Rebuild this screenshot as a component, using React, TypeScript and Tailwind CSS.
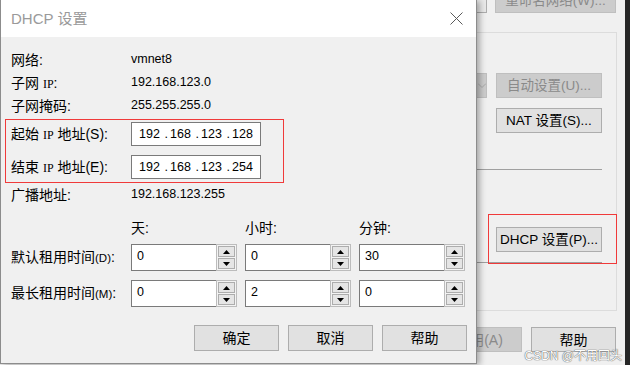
import React from "react";

const Up = () => (
  <svg width="7" height="4" viewBox="0 0 7 4"><polygon points="0,4 3.5,0 7,4" fill="#000" /></svg>
);
const Down = () => (
  <svg width="7" height="4" viewBox="0 0 7 4"><polygon points="0,0 7,0 3.5,4" fill="#000" /></svg>
);

function Spinner({ value }: { value: string }) {
  return (
    <div className="flex w-[106px] h-[27px] shrink-0">
      <div className="flex-1 bg-white border border-r-0 border-[#7a7a7a] flex items-center pl-[5px] pb-[2px] text-[12.5px] leading-none text-[#000]">
        {value}
      </div>
      <div className="w-[21px] h-full border border-[#bcbcbc] bg-[#f3f3f3] p-[1px] flex flex-col gap-[1px]">
        <div className="flex-1 bg-[#e5e5e5] border border-[#adadad] flex items-center justify-center">
          <Up />
        </div>
        <div className="flex-1 bg-[#e5e5e5] border border-[#adadad] flex items-center justify-center">
          <Down />
        </div>
      </div>
    </div>
  );
}

function IpBox({ parts }: { parts: string[] }) {
  return (
    <div className="w-[130px] h-[24px] bg-white border border-[#7a7a7a] flex items-center pl-[7px] text-[12.5px] leading-none">
      {parts.map((p, i) => (
        <React.Fragment key={i}>
          {i > 0 && <span className="w-[10px] flex justify-end pr-[2px]">.</span>}
          <span className="w-[21px]">{p}</span>
        </React.Fragment>
      ))}
    </div>
  );
}

function InfoRow({ label, value }: { label: React.ReactNode; value: string }) {
  return (
    <div className="flex items-center h-[23px] shrink-0">
      <div className="w-[120px] text-[14px] leading-none">{label}</div>
      <div className="text-[12.5px] leading-none">{value}</div>
    </div>
  );
}

const Ip = () => <span className="[font-family:'Liberation_Serif',serif] text-[12px]">IP</span>;

function Btn({ children, disabled }: { children: React.ReactNode; disabled?: boolean }) {
  return (
    <div
      className={
        disabled
          ? "w-[106px] h-[25px] shrink-0 flex items-center justify-center bg-[#cccccc] border border-[#bfbfbf] text-[#8a8a8a] text-[13.5px] leading-none"
          : "w-[106px] h-[25px] shrink-0 flex items-center justify-center bg-[#e1e1e1] border border-[#adadad] text-black text-[13.5px] leading-none"
      }
    >
      {children}
    </div>
  );
}

export default function App() {
  return (
    <div className="relative w-[630px] h-[365px] overflow-hidden bg-[#f0f0f0] text-black [font-family:'Liberation_Sans','Noto_Sans_CJK_SC',sans-serif]">
      {/* background window */}
      <div className="flex h-full">
        <div className="w-[477px] shrink-0" />
        <div className="relative w-[148px] shrink-0 flex flex-col">
          <div className="flex items-end h-[13px] shrink-0">
            <div className="w-[10px] h-[25px] shrink-0 bg-[#e9e9e9] border border-l-0 border-[#adadad]" />
            <div className="ml-[8px] w-[121px] h-[25px] shrink-0 flex items-center justify-center bg-[#cccccc] border border-[#bfbfbf] text-[#8a8a8a] text-[13.5px] leading-none">
              重命名网络(W)...
            </div>
          </div>
          <div className="mt-[19px] w-[140px] h-[279px] shrink-0 border-t border-r border-b border-[#dcdcdc] flex flex-col">
            <div className="mt-[40px] flex items-center h-[25px]">
              <div className="w-[10px] h-[25px] bg-[#cccccc] border-y border-r border-[#bfbfbf] flex items-center justify-start">
                <svg width="8" height="6" viewBox="0 0 8 6" className="ml-[1px]">
                  <path d="M0 0.5L4 4.5L8 0.5" stroke="#a8a8a8" strokeWidth="1" fill="none" />
                </svg>
              </div>
              <div className="ml-[9px]">
                <Btn disabled>自动设置(U)...</Btn>
              </div>
            </div>
            <div className="mt-[10px] ml-[19px]">
              <Btn>NAT 设置(S)...</Btn>
            </div>
            <div className="mt-[36px] w-[125px] h-px bg-[#a0a0a0]" />
            <div className="mt-[57px] ml-[19px]">
              <Btn>DHCP 设置(P)...</Btn>
            </div>
            <div className="mt-[10px] w-[125px] h-px bg-[#a0a0a0]" />
          </div>
          <div className="mt-[16px] flex gap-[9px] shrink-0">
            <div className="ml-[-40px] w-[85px] h-[25px] flex items-center justify-center bg-[#cccccc] border border-[#bfbfbf] text-[#8a8a8a] text-[14px] leading-none">
              应用(A)
            </div>
            <div className="w-[85px] h-[25px] flex items-center justify-center bg-[#e1e1e1] border border-[#adadad] text-[14px] leading-none">
              帮助
            </div>
          </div>
          {/* red annotation */}
          <div className="absolute left-[11px] top-[214px] w-[129px] h-[50px] border border-[#f03a3a]" />
        </div>
        <div className="flex-1 bg-[#262626]" />
      </div>

      {/* dialog */}
      <div className="absolute left-0 top-0 w-[477px] h-[364px] flex flex-col bg-[#f0f0f0] border-l border-r border-b border-[#8c8c8c] shadow-[3px_1px_6px_rgba(0,0,0,0.3)]">
        <div className="h-[37px] shrink-0 bg-white flex items-center justify-between pl-[10px] pr-[13px]">
          <span className="text-[15px] leading-none text-[#9a9a9a]">DHCP 设置</span>
          <svg width="13" height="13" viewBox="0 0 13 13">
            <path d="M0.5 0.5L12.5 12.5M12.5 0.5L0.5 12.5" stroke="#5a5a5a" strokeWidth="1" />
          </svg>
        </div>
        <div className="flex flex-col pl-[10px] pr-[9px] pt-[11px]">
          <InfoRow label="网络:" value="vmnet8" />
          <InfoRow label={<>子网 <Ip />:</>} value="192.168.123.0" />
          <InfoRow label="子网掩码:" value="255.255.255.0" />

          <div className="mt-[2px] ml-[-6px] w-[279px] h-[64px] shrink-0 border border-[#f03a3a] pl-[5px] pt-[2px] flex flex-col">
            <div className="flex items-center h-[24px]">
              <div className="w-[120px] text-[14px] leading-none">起始 <Ip /> 地址(S):</div>
              <IpBox parts={["192", "168", "123", "128"]} />
            </div>
            <div className="mt-[9px] flex items-center h-[24px]">
              <div className="w-[120px] text-[14px] leading-none">结束 <Ip /> 地址(E):</div>
              <IpBox parts={["192", "168", "123", "254"]} />
            </div>
          </div>

          <InfoRow label="广播地址:" value="192.168.123.255" />

          <div className="mt-[11px] h-[22px] flex items-center text-[14px] leading-none">
            <div className="w-[120px]" />
            <div className="w-[114px]">天:</div>
            <div className="w-[114px]">小时:</div>
            <div>分钟:</div>
          </div>

          <div className="mt-[5px] flex items-center gap-[8px]">
            <div className="w-[112px] text-[14px] leading-none">
              默认租用时间<span className="text-[11.5px]">(D)</span>:
            </div>
            <Spinner value="0" />
            <Spinner value="0" />
            <Spinner value="30" />
          </div>
          <div className="mt-[9px] flex items-center gap-[8px]">
            <div className="w-[112px] text-[14px] leading-none">
              最长租用时间<span className="text-[11.5px]">(M)</span>:
            </div>
            <Spinner value="0" />
            <Spinner value="2" />
            <Spinner value="0" />
          </div>

          <div className="mt-[18px] flex justify-end gap-[9px]">
            {["确定", "取消", "帮助"].map((t) => (
              <div
                key={t}
                className="w-[85px] h-[26px] flex items-center justify-center bg-[#e1e1e1] border border-[#adadad] text-[14px] leading-none"
              >
                {t}
              </div>
            ))}
          </div>
        </div>
      </div>

      <div className="absolute right-[8px] bottom-[3px] text-[12px] leading-none text-white [text-shadow:0_0_1px_#555,0_0_1px_#555]">
        CSDN @不用回头
      </div>
    </div>
  );
}
